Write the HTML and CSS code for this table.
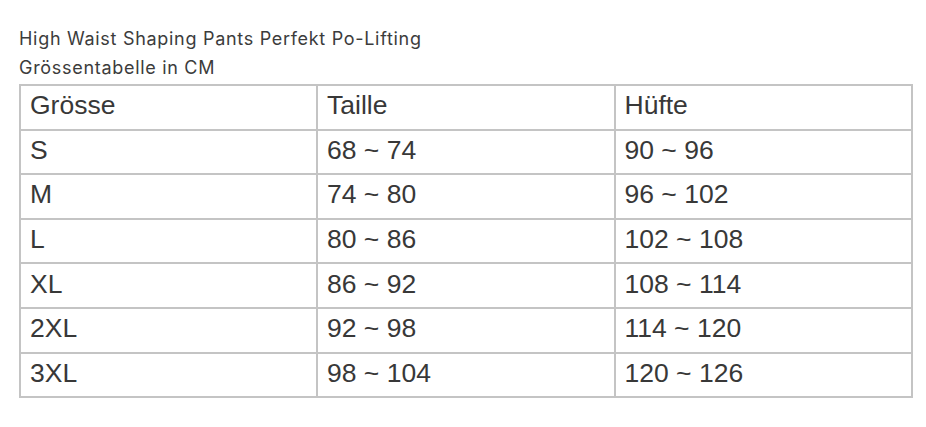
FILE: index.html
```html
<!DOCTYPE html>
<html lang="de">
<head>
<meta charset="utf-8">
<title>Grössentabelle</title>
<link rel="stylesheet" href="styles.css">
</head>
<body>
<div class="page">
  <p class="title">High Waist Shaping Pants Perfekt Po-Lifting</p>
  <p class="title">Grössentabelle in CM</p>
  <table class="sizes">
    <tr><td>Grösse</td><td>Taille</td><td>Hüfte</td></tr>
    <tr><td>S</td><td>68 ~ 74</td><td>90 ~ 96</td></tr>
    <tr><td>M</td><td>74 ~ 80</td><td>96 ~ 102</td></tr>
    <tr><td>L</td><td>80 ~ 86</td><td>102 ~ 108</td></tr>
    <tr><td>XL</td><td>86 ~ 92</td><td>108 ~ 114</td></tr>
    <tr><td>2XL</td><td>92 ~ 98</td><td>114 ~ 120</td></tr>
    <tr><td>3XL</td><td>98 ~ 104</td><td>120 ~ 126</td></tr>
  </table>
</div>
</body>
</html>
```
FILE: styles.css
```css
html, body {
  margin: 0;
  padding: 0;
  background: #ffffff;
}
.page {
  padding: 24px 0 0 19px;
  font-family: "Liberation Sans", Arial, sans-serif;
  color: #3a3a3a;
}
.title {
  margin: 0;
  font-family: Inter, "Liberation Sans", sans-serif;
  font-size: 18px;
  letter-spacing: 0.7px;
  line-height: 29px;
  color: #3c3c3c;
}
.sizes {
  margin-top: 2px;
  width: 894px;
  border-collapse: collapse;
  table-layout: fixed;
}
.sizes td {
  border: 2px solid #c4c4c4;
  height: 39.6px;
  padding: 0 0 3px 9px;
  font-size: 26.5px;
  color: #383838;
  vertical-align: middle;
}
.sizes td:first-child {
  width: 286px;
}
```
